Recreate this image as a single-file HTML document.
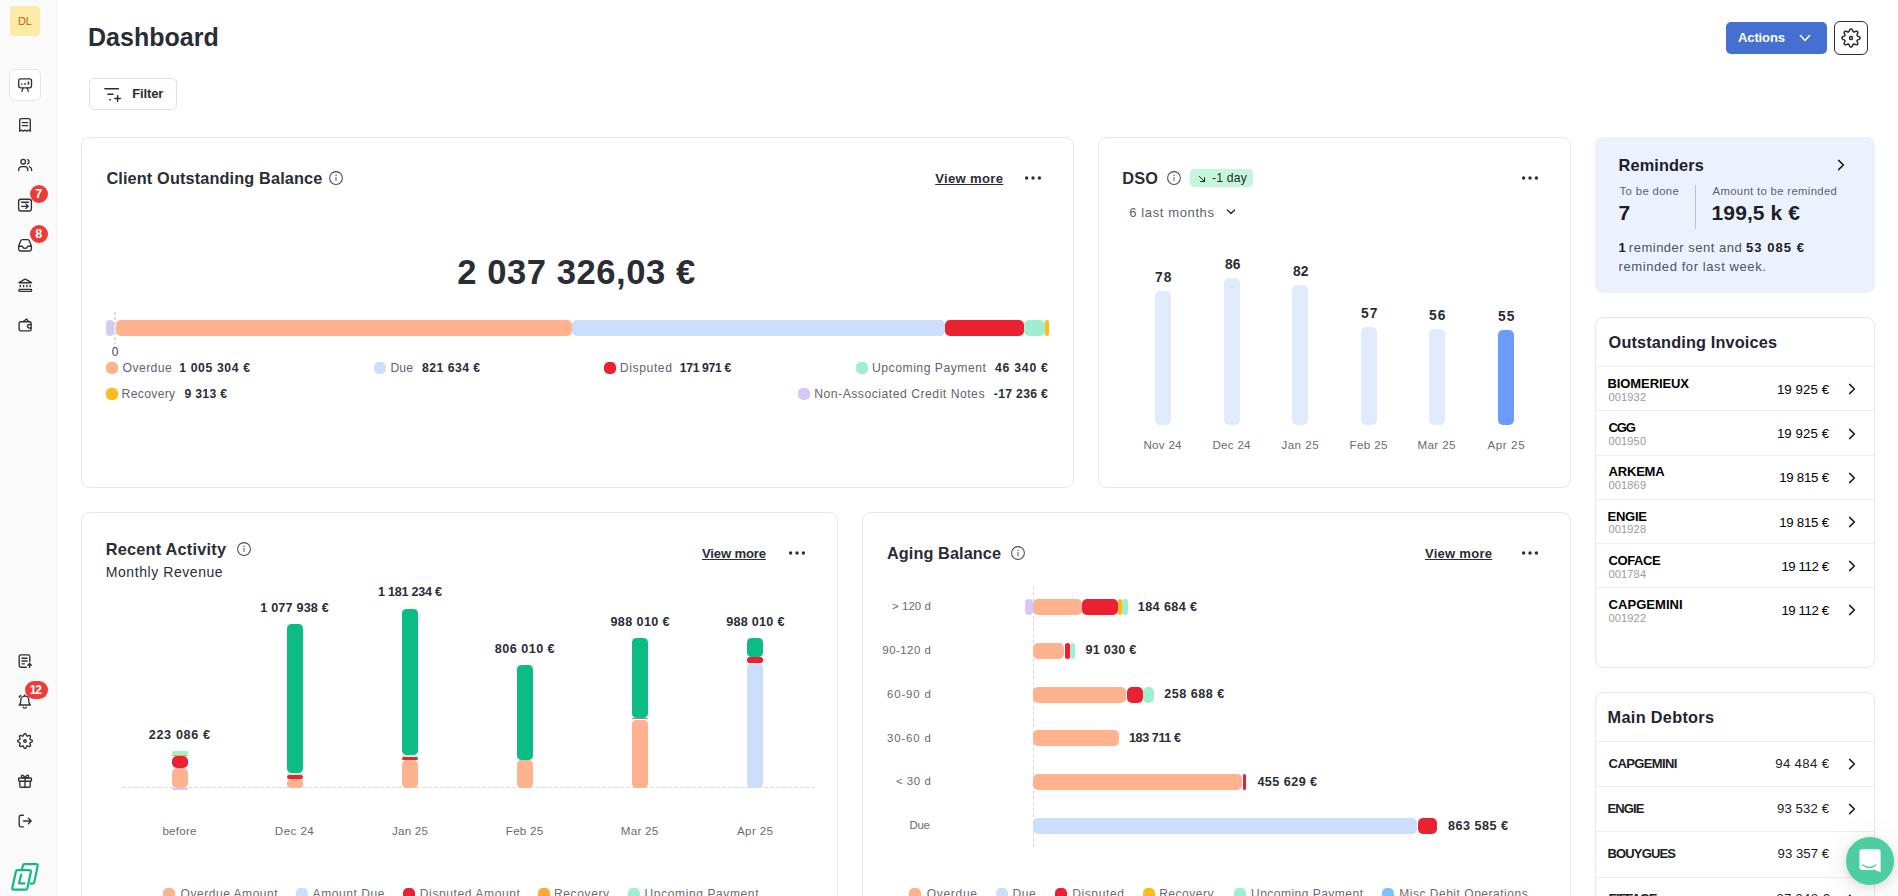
<!DOCTYPE html>
<html lang="en"><head><meta charset="utf-8"><title>Dashboard</title><style>
html,body{margin:0;padding:0;}
body{width:1898px;height:896px;overflow:hidden;background:#fff;position:relative;font-family:"Liberation Sans", sans-serif;}
.a{position:absolute;box-sizing:border-box;}
.t{position:absolute;white-space:nowrap;margin:0;padding:0;}
</style></head><body><nav aria-label="Sidebar"><div class="a" style="left:0px;top:0px;width:57px;height:896px;background:#fafafa;border-right:1px solid #f2f3f5;"></div><div class="a" style="left:10px;top:6px;width:30px;height:30px;background:#fdeaa7;border-radius:4px;"></div><span class="t" style="left:18.02px;top:15px;font-size:11px;line-height:12px;font-weight:400;color:#b26a08;letter-spacing:-0.112px;">DL</span><div class="a" style="left:9px;top:69px;width:32px;height:32px;background:#fff;border-radius:6px;border:1px solid #e4e6ea;"></div><svg class="a" style="left:17.0px;top:77.0px;" width="16" height="16" viewBox="0 0 16 16" fill="none" stroke="#2f3237" stroke-width="1.35" stroke-linecap="round" stroke-linejoin="round"><rect x="1.7" y="1.8" width="12.8" height="9" rx="2"/><path d="M6 11 L4.9 14.4 M10.2 11 L11.3 14.4"/><path d="M4.7 6.6v1.2 M8 6v1.8 M11.4 4.4v3.4" stroke-width="1.5" stroke-linecap="butt"/></svg><svg class="a" style="left:17.0px;top:117.0px;" width="16" height="16" viewBox="0 0 16 16" fill="none" stroke="#2f3237" stroke-width="1.35" stroke-linecap="round" stroke-linejoin="round"><path d="M2.7 14.2 V3.2 a1.6 1.6 0 0 1 1.6-1.6 h7.4 a1.6 1.6 0 0 1 1.6 1.6 V14.2 l-1.8-1 -1.75 1 -1.75-1 -1.75 1 -1.75-1 z"/><path d="M5.3 5.6h5.4 M5.3 8.6h5.4"/></svg><svg class="a" style="left:17.0px;top:157.0px;" width="16" height="16" viewBox="0 0 16 16" fill="none" stroke="#2f3237" stroke-width="1.35" stroke-linecap="round" stroke-linejoin="round"><circle cx="6.2" cy="4.7" r="2.3"/><path d="M1.7 13.6 v-1 a3 3 0 0 1 3-3 h3 a3 3 0 0 1 3 3 v1"/><path d="M10.6 2.6 a2.3 2.3 0 0 1 0 4.3 M14.6 13.6 v-1 a3 3 0 0 0 -2.1-2.8"/></svg><svg class="a" style="left:17.0px;top:197.0px;" width="16" height="16" viewBox="0 0 16 16" fill="none" stroke="#2f3237" stroke-width="1.35" stroke-linecap="round" stroke-linejoin="round"><rect x="1.6" y="2.2" width="12.8" height="11.8" rx="2.2"/><path d="M4.6 5.2h6.8 M4.6 9.3h6.6 M8.9 7 l2.3 2.3 -2.3 2.3"/></svg><svg class="a" style="left:17.0px;top:237.0px;" width="16" height="16" viewBox="0 0 16 16" fill="none" stroke="#2f3237" stroke-width="1.35" stroke-linecap="round" stroke-linejoin="round"><path d="M1.6 9.2 L3.6 3.9 a2 2 0 0 1 1.9-1.3 h5 a2 2 0 0 1 1.9 1.3 L14.4 9.2 v3 a1.8 1.8 0 0 1 -1.8 1.8 H3.4 a1.8 1.8 0 0 1 -1.8-1.8 z"/><path d="M1.6 9.2 h3.7 c.4 1.4 1.3 2.1 2.7 2.1 s2.3-.7 2.7-2.1 h3.7"/></svg><svg class="a" style="left:17.0px;top:277.0px;" width="16" height="16" viewBox="0 0 16 16" fill="none" stroke="#2f3237" stroke-width="1.35" stroke-linecap="round" stroke-linejoin="round"><path d="M2 5.7 L7.6 2.3 Q8.2 1.95 8.8 2.3 L14.5 5.7 z"/><path d="M3.3 7.8v2.5 M6.6 7.8v2.5 M9.9 7.8v2.5 M13.2 7.8v2.5" stroke-linecap="butt"/><rect x="2" y="12.3" width="12.5" height="2" rx=".4"/></svg><svg class="a" style="left:17.0px;top:317.0px;" width="16" height="16" viewBox="0 0 16 16" fill="none" stroke="#2f3237" stroke-width="1.35" stroke-linecap="round" stroke-linejoin="round"><path d="M6.2 4.5 L9.5 2 11.5 4.5"/><rect x="2.1" y="4.7" width="12" height="9.1" rx="1.5"/><path d="M14.1 7.5 h-1.9 a1.75 1.75 0 0 0 0 3.5 h1.9"/></svg><svg class="a" style="left:17.0px;top:653.0px;" width="16" height="16" viewBox="0 0 16 16" fill="none" stroke="#2f3237" stroke-width="1.35" stroke-linecap="round" stroke-linejoin="round"><path d="M9.4 14.2 H4 a1.8 1.8 0 0 1 -1.8-1.8 V3.6 A1.8 1.8 0 0 1 4 1.8 h7 a1.8 1.8 0 0 1 1.8 1.8 v5.2"/><path d="M5 5.2h5 M5 8h5 M5 10.8h2.4"/><path d="M12.6 14.6 v-4 M10.9 12.2 l1.7-1.7 1.7 1.7"/></svg><svg class="a" style="left:17.0px;top:693.0px;" width="16" height="16" viewBox="0 0 16 16" fill="none" stroke="#2f3237" stroke-width="1.35" stroke-linecap="round" stroke-linejoin="round"><path d="M2.2 12 c1.2-1 1.6-2.4 1.6-4 v-.9 a4 4 0 0 1 8 0 v.9 c0 1.6.4 3 1.6 4 z"/><path d="M6.3 14.2 a1.7 1.7 0 0 0 3 0 M7.8 2.9v-.9 M3.6 2.6 a5 5 0 0 0 -1.4 1.6"/></svg><svg class="a" style="left:17.0px;top:733.0px;" width="16" height="16" viewBox="0 0 16 16" fill="none" stroke="#2f3237" stroke-width="1.35" stroke-linecap="round" stroke-linejoin="round"><path d="M8.00 0.60 L8.48 0.73 L8.91 1.11 L9.24 1.77 L9.49 2.45 L9.74 2.87 L10.03 3.10 L10.39 3.14 L10.87 3.02 L11.53 2.72 L12.23 2.48 L12.80 2.52 L13.23 2.77 L13.48 3.20 L13.52 3.77 L13.28 4.47 L12.98 5.13 L12.86 5.61 L12.90 5.97 L13.13 6.26 L13.55 6.51 L14.23 6.76 L14.89 7.09 L15.27 7.52 L15.40 8.00 L15.27 8.48 L14.89 8.91 L14.23 9.24 L13.55 9.49 L13.13 9.74 L12.90 10.03 L12.86 10.39 L12.98 10.87 L13.28 11.53 L13.52 12.23 L13.48 12.80 L13.23 13.23 L12.80 13.48 L12.23 13.52 L11.53 13.28 L10.87 12.98 L10.39 12.86 L10.03 12.90 L9.74 13.13 L9.49 13.55 L9.24 14.23 L8.91 14.89 L8.48 15.27 L8.00 15.40 L7.52 15.27 L7.09 14.89 L6.76 14.23 L6.51 13.55 L6.26 13.13 L5.97 12.90 L5.61 12.86 L5.13 12.98 L4.47 13.28 L3.77 13.52 L3.20 13.48 L2.77 13.23 L2.52 12.80 L2.48 12.23 L2.72 11.53 L3.02 10.87 L3.14 10.39 L3.10 10.03 L2.87 9.74 L2.45 9.49 L1.77 9.24 L1.11 8.91 L0.73 8.48 L0.60 8.00 L0.73 7.52 L1.11 7.09 L1.77 6.76 L2.45 6.51 L2.87 6.26 L3.10 5.97 L3.14 5.61 L3.02 5.13 L2.72 4.47 L2.48 3.77 L2.52 3.20 L2.77 2.77 L3.20 2.52 L3.77 2.48 L4.47 2.72 L5.13 3.02 L5.61 3.14 L5.97 3.10 L6.26 2.87 L6.51 2.45 L6.76 1.77 L7.09 1.11 L7.52 0.73 z"/><circle cx="8" cy="8" r="1.25"/></svg><svg class="a" style="left:17.0px;top:773.0px;" width="16" height="16" viewBox="0 0 16 16" fill="none" stroke="#2f3237" stroke-width="1.35" stroke-linecap="round" stroke-linejoin="round"><rect x="1.6" y="5" width="12.8" height="3.2" rx=".8"/><path d="M2.8 8.2 v5 a1 1 0 0 0 1 1 h8.4 a1 1 0 0 0 1-1 v-5 M8 5v9.2"/><path d="M8 5 C6.8 2 4.6 1.6 4.4 3.2 4.2 4.6 6 5 8 5 c2 0 3.8-.4 3.6-1.8 C11.4 1.6 9.2 2 8 5z"/></svg><svg class="a" style="left:17.0px;top:813.0px;" width="16" height="16" viewBox="0 0 16 16" fill="none" stroke="#2f3237" stroke-width="1.35" stroke-linecap="round" stroke-linejoin="round"><path d="M6.4 2.2 H4 a1.8 1.8 0 0 0 -1.8 1.8 v8 A1.8 1.8 0 0 0 4 13.8 h2.4"/><path d="M6.6 8 h7.6 M11.4 5.2 L14.2 8 11.4 10.8"/></svg><div class="a" style="left:29.799999999999997px;top:184.8px;width:18px;height:18px;background:#ea3d37;border-radius:9px;"></div><span class="t" style="left:35.22px;top:187px;font-size:12.5px;line-height:14px;font-weight:700;color:#fff;">7</span><div class="a" style="left:29.799999999999997px;top:224.8px;width:18px;height:18px;background:#ea3d37;border-radius:9px;"></div><span class="t" style="left:35.22px;top:227px;font-size:12.5px;line-height:14px;font-weight:700;color:#fff;">8</span><div class="a" style="left:25px;top:681px;width:23px;height:18px;background:#ea3d37;border-radius:9px;"></div><span class="t" style="left:29.72px;top:683px;font-size:12px;line-height:14px;font-weight:700;color:#fff;letter-spacing:-1.200px;">12</span><svg class="a" style="left:8px;top:860px;" width="34" height="36" viewBox="0 0 34 36" fill="none" stroke="#12b981" stroke-width="2.2" stroke-linecap="round" stroke-linejoin="round"><path d="M14.1 8.6 L14.9 5.4 Q15.2 4.2 16.4 4.2 L28.4 4.2 Q30 4.2 29.7 5.8 L26.2 22.4 Q25.9 23.6 24.6 23.6 L22.8 23.6"/><path d="M9.6 10.2 L21.6 10.2 Q23.2 10.2 22.9 11.8 L19.3 28.5 Q19 29.7 17.7 29.7 L5.6 29.7 Q4 29.7 4.3 28.1 L7.9 11.4 Q8.2 10.2 9.6 10.2 z"/><path d="M13.4 13.7 L11 23.3 L17.3 23.3" stroke-linecap="butt"/></svg></nav><header aria-label="Header"><span class="t" style="left:88.0px;top:23px;font-size:25px;line-height:28px;font-weight:700;color:#2a2d36;letter-spacing:0.013px;">Dashboard</span><div class="a" style="left:1726px;top:22px;width:101px;height:32px;background:#4570d2;border-radius:5px;"></div><span class="t" style="left:1738px;top:30px;font-size:13px;line-height:15px;font-weight:700;color:#fff;letter-spacing:-0.120px;">Actions</span><svg class="a" style="left:1799px;top:33px;" width="12" height="10" viewBox="0 0 12 10" fill="none" stroke="#fff" stroke-width="1.5" stroke-linecap="round" stroke-linejoin="round"><path d="M1.4 2.6 L6 7.4 10.6 2.6"/></svg><div class="a" style="left:1834px;top:21px;width:34px;height:34px;background:#fff;border-radius:6px;border:1px solid #2a2d33;"></div><svg class="a" style="left:1839px;top:26px;" width="24" height="24" viewBox="0 0 24 24" fill="none" stroke="#2a2d33" stroke-width="1.5" stroke-linecap="round" stroke-linejoin="round"><path d="M12.00 2.85 L12.59 3.01 L13.12 3.48 L13.53 4.30 L13.84 5.14 L14.15 5.66 L14.51 5.95 L14.96 6.00 L15.55 5.85 L16.36 5.47 L17.23 5.18 L17.94 5.23 L18.47 5.53 L18.77 6.06 L18.82 6.77 L18.53 7.64 L18.15 8.45 L18.00 9.04 L18.05 9.49 L18.34 9.85 L18.86 10.16 L19.70 10.47 L20.52 10.88 L20.99 11.41 L21.15 12.00 L20.99 12.59 L20.52 13.12 L19.70 13.53 L18.86 13.84 L18.34 14.15 L18.05 14.51 L18.00 14.96 L18.15 15.55 L18.53 16.36 L18.82 17.23 L18.77 17.94 L18.47 18.47 L17.94 18.77 L17.23 18.82 L16.36 18.53 L15.55 18.15 L14.96 18.00 L14.51 18.05 L14.15 18.34 L13.84 18.86 L13.53 19.70 L13.12 20.52 L12.59 20.99 L12.00 21.15 L11.41 20.99 L10.88 20.52 L10.47 19.70 L10.16 18.86 L9.85 18.34 L9.49 18.05 L9.04 18.00 L8.45 18.15 L7.64 18.53 L6.77 18.82 L6.06 18.77 L5.53 18.47 L5.23 17.94 L5.18 17.23 L5.47 16.36 L5.85 15.55 L6.00 14.96 L5.95 14.51 L5.66 14.15 L5.14 13.84 L4.30 13.53 L3.48 13.12 L3.01 12.59 L2.85 12.00 L3.01 11.41 L3.48 10.88 L4.30 10.47 L5.14 10.16 L5.66 9.85 L5.95 9.49 L6.00 9.04 L5.85 8.45 L5.47 7.64 L5.18 6.77 L5.23 6.06 L5.53 5.53 L6.06 5.23 L6.77 5.18 L7.64 5.47 L8.45 5.85 L9.04 6.00 L9.49 5.95 L9.85 5.66 L10.16 5.14 L10.47 4.30 L10.88 3.48 L11.41 3.01 z"/><rect x="10.6" y="10.6" width="2.8" height="2.8" rx="1"/></svg><div class="a" style="left:89px;top:78px;width:88px;height:32px;background:#fff;border-radius:5px;border:1px solid #dfe1e5;"></div><svg class="a" style="left:103px;top:86px;" width="20" height="18" viewBox="0 0 20 18" fill="none" stroke="#2a2d33" stroke-width="1.5" stroke-linecap="round" stroke-linejoin="round"><path d="M1.85 2.75H15.45 M4.85 8.3H9.95 M6.8 13.8h.6 M11.85 12.5H17.25 M14.6 9.85V15.15"/></svg><span class="t" style="left:132.2px;top:86px;font-size:13px;line-height:15px;font-weight:700;color:#2a2d36;letter-spacing:-0.117px;">Filter</span></header><section aria-label="Client Outstanding Balance"><div class="a" style="left:81px;top:137px;width:993px;height:351px;background:#fff;border-radius:8.6px;border:1px solid #e5e7ea;"></div><span class="t" style="left:106.4px;top:169px;font-size:16.3px;line-height:18px;font-weight:700;color:#2a2d36;letter-spacing:0.134px;">Client Outstanding Balance</span><svg class="a" style="left:328px;top:170px;" width="16" height="16" viewBox="0 0 16 16" fill="none" stroke="#4a4d55" stroke-width="1.05" stroke-linecap="round" stroke-linejoin="round"><circle cx="8" cy="8" r="6.4"/><path d="M8 7.4v3.2" stroke-width="1.15" stroke="#6a6d75"/><circle cx="8" cy="5.2" r=".45" fill="#6a6d75" stroke="#6a6d75" stroke-width=".5"/></svg><span class="t" style="left:935.2px;top:171px;font-size:13.1px;line-height:15px;font-weight:700;color:#2a2d36;letter-spacing:0.322px;text-decoration:underline;text-underline-offset:1px;">View more</span><svg class="a" style="left:1023px;top:174px;" width="20" height="8" viewBox="0 0 20 8" fill="#2a2d33" stroke="none" stroke-width="0" stroke-linecap="round" stroke-linejoin="round"><circle cx="3.6" cy="4" r="1.7"/><circle cx="10" cy="4" r="1.7"/><circle cx="16.4" cy="4" r="1.7"/></svg><span class="t" style="left:457.22px;top:253px;font-size:34.6px;line-height:38px;font-weight:700;color:#2a2d36;letter-spacing:0.554px;">2 037 326,03 €</span><svg class="a" style="left:112px;top:312px" width="8" height="32"><line x1="3" y1="0" x2="3" y2="32" stroke="#dfdfdf" stroke-width="2" stroke-dasharray="3 2"/></svg><div class="a" style="left:106px;top:320px;width:8px;height:16px;background:#d4c8f5;border-radius:4px;"></div><div class="a" style="left:116px;top:320px;width:456px;height:16px;background:#feb28d;border-radius:5px;"></div><div class="a" style="left:572px;top:320px;width:373px;height:16px;background:#cbdefc;border-radius:5px;"></div><div class="a" style="left:945px;top:320px;width:79px;height:16px;background:#e92131;border-radius:5px;"></div><div class="a" style="left:1024px;top:320px;width:21px;height:16px;background:#a0eed0;border-radius:5px;"></div><div class="a" style="left:1045px;top:320px;width:4px;height:16px;background:#fbbc1c;border-radius:2px;"></div><span class="t" style="left:111.86px;top:345px;font-size:12px;line-height:14px;font-weight:400;color:#444;">0</span><div class="a" style="left:106px;top:362px;width:12px;height:12px;background:#feb28d;border-radius:4.8px;"></div><span class="t" style="left:122.6px;top:361px;font-size:12.2px;line-height:14px;font-weight:400;color:#5f6470;letter-spacing:0.402px;">Overdue</span><span class="t" style="left:179.2px;top:361px;font-size:12.2px;line-height:14px;font-weight:700;color:#2a2d36;letter-spacing:0.640px;">1 005 304 €</span><div class="a" style="left:374px;top:362px;width:12px;height:12px;background:#cbdefc;border-radius:4.8px;"></div><span class="t" style="left:390.4px;top:361px;font-size:12.2px;line-height:14px;font-weight:400;color:#5f6470;letter-spacing:0.110px;">Due</span><span class="t" style="left:422.0px;top:361px;font-size:12.2px;line-height:14px;font-weight:700;color:#2a2d36;letter-spacing:0.477px;">821 634 €</span><div class="a" style="left:604px;top:362px;width:12px;height:12px;background:#e92131;border-radius:4.8px;"></div><span class="t" style="left:619.8px;top:361px;font-size:12.2px;line-height:14px;font-weight:400;color:#5f6470;letter-spacing:0.587px;">Disputed</span><span class="t" style="left:679.8px;top:361px;font-size:12.2px;line-height:14px;font-weight:700;color:#2a2d36;letter-spacing:-0.352px;">171 971 €</span><div class="a" style="left:856px;top:362px;width:12px;height:12px;background:#a0eed0;border-radius:4.8px;"></div><span class="t" style="left:872px;top:361px;font-size:12.2px;line-height:14px;font-weight:400;color:#5f6470;letter-spacing:0.509px;">Upcoming Payment</span><span class="t" style="left:995.0px;top:361px;font-size:12.2px;line-height:14px;font-weight:700;color:#2a2d36;letter-spacing:0.777px;">46 340 €</span><div class="a" style="left:106px;top:388px;width:12px;height:12px;background:#fbbc1c;border-radius:4.8px;"></div><span class="t" style="left:121.6px;top:387px;font-size:12.2px;line-height:14px;font-weight:400;color:#5f6470;letter-spacing:0.299px;">Recovery</span><span class="t" style="left:184.4px;top:387px;font-size:12.2px;line-height:14px;font-weight:700;color:#2a2d36;letter-spacing:0.318px;">9 313 €</span><div class="a" style="left:798px;top:388px;width:12px;height:12px;background:#d4c8f5;border-radius:4.8px;"></div><span class="t" style="left:814.2px;top:387px;font-size:12.2px;line-height:14px;font-weight:400;color:#5f6470;letter-spacing:0.506px;">Non-Associated Credit Notes</span><span class="t" style="left:993.8px;top:387px;font-size:12.2px;line-height:14px;font-weight:700;color:#2a2d36;letter-spacing:0.319px;">-17 236 €</span></section><section aria-label="DSO"><div class="a" style="left:1098px;top:137px;width:473px;height:351px;background:#fff;border-radius:8.6px;border:1px solid #e5e7ea;"></div><span class="t" style="left:1122.2px;top:169px;font-size:16.3px;line-height:18px;font-weight:700;color:#2a2d36;letter-spacing:0.252px;">DSO</span><svg class="a" style="left:1166px;top:170px;" width="16" height="16" viewBox="0 0 16 16" fill="none" stroke="#4a4d55" stroke-width="1.05" stroke-linecap="round" stroke-linejoin="round"><circle cx="8" cy="8" r="6.4"/><path d="M8 7.4v3.2" stroke-width="1.15" stroke="#6a6d75"/><circle cx="8" cy="5.2" r=".45" fill="#6a6d75" stroke="#6a6d75" stroke-width=".5"/></svg><div class="a" style="left:1190px;top:169px;width:63px;height:18px;background:#c5f6db;border-radius:4.5px;"></div><svg class="a" style="left:1197px;top:173.5px;" width="10" height="10" viewBox="0 0 10 10" fill="none" stroke="#1d2b25" stroke-width="1.0" stroke-linecap="round" stroke-linejoin="round"><path d="M2.2 2.2 L7.4 7.4 M3.6 7.5 H7.5 V3.6"/></svg><span class="t" style="left:1212.0px;top:171px;font-size:12.2px;line-height:14px;font-weight:400;color:#1d2b25;letter-spacing:0.173px;">-1 day</span><span class="t" style="left:1129.2px;top:205px;font-size:13px;line-height:15px;font-weight:400;color:#5b6170;letter-spacing:0.622px;">6 last months</span><svg class="a" style="left:1226px;top:208px;" width="10" height="8" viewBox="0 0 10 8" fill="none" stroke="#2a2d33" stroke-width="1.4" stroke-linecap="round" stroke-linejoin="round"><path d="M1.4 1.9 L5 5.6 8.6 1.9"/></svg><div class="a" style="left:1155px;top:291.3px;width:16px;height:133.39999999999998px;background:#e0ecfd;border-radius:5px;"></div><span class="t" style="left:1155.04px;top:270px;font-size:13.8px;line-height:15px;font-weight:700;color:#2a2d36;letter-spacing:0.961px;">78</span><span class="t" style="left:1143.44px;top:439px;font-size:11.6px;line-height:12px;font-weight:400;color:#686b73;letter-spacing:0.275px;">Nov 24</span><div class="a" style="left:1224px;top:278px;width:16px;height:146.7px;background:#e0ecfd;border-radius:5px;"></div><span class="t" style="left:1224.99px;top:257px;font-size:13.8px;line-height:15px;font-weight:700;color:#2a2d36;letter-spacing:0.061px;">86</span><span class="t" style="left:1212.44px;top:439px;font-size:11.6px;line-height:12px;font-weight:400;color:#686b73;letter-spacing:0.275px;">Dec 24</span><div class="a" style="left:1292px;top:285px;width:16px;height:139.7px;background:#e0ecfd;border-radius:5px;"></div><span class="t" style="left:1292.99px;top:264px;font-size:13.8px;line-height:15px;font-weight:700;color:#2a2d36;letter-spacing:0.061px;">82</span><span class="t" style="left:1281.4px;top:439px;font-size:11.6px;line-height:12px;font-weight:400;color:#686b73;letter-spacing:0.479px;">Jan 25</span><div class="a" style="left:1361px;top:327.3px;width:16px;height:97.39999999999998px;background:#e0ecfd;border-radius:5px;"></div><span class="t" style="left:1361.04px;top:306px;font-size:13.8px;line-height:15px;font-weight:700;color:#2a2d36;letter-spacing:0.961px;">57</span><span class="t" style="left:1349.44px;top:439px;font-size:11.6px;line-height:12px;font-weight:400;color:#686b73;letter-spacing:0.400px;">Feb 25</span><div class="a" style="left:1429px;top:329px;width:16px;height:95.69999999999999px;background:#e0ecfd;border-radius:5px;"></div><span class="t" style="left:1429.04px;top:308px;font-size:13.8px;line-height:15px;font-weight:700;color:#2a2d36;letter-spacing:0.961px;">56</span><span class="t" style="left:1417.44px;top:439px;font-size:11.6px;line-height:12px;font-weight:400;color:#686b73;letter-spacing:0.403px;">Mar 25</span><div class="a" style="left:1498px;top:330.4px;width:16px;height:94.30000000000001px;background:#6c9bfd;border-radius:5px;"></div><span class="t" style="left:1498.04px;top:309px;font-size:13.8px;line-height:15px;font-weight:700;color:#2a2d36;letter-spacing:0.961px;">55</span><span class="t" style="left:1487.4px;top:439px;font-size:11.6px;line-height:12px;font-weight:400;color:#686b73;letter-spacing:0.608px;">Apr 25</span><svg class="a" style="left:1520px;top:174px;" width="20" height="8" viewBox="0 0 20 8" fill="#2a2d33" stroke="none" stroke-width="0" stroke-linecap="round" stroke-linejoin="round"><circle cx="3.6" cy="4" r="1.7"/><circle cx="10" cy="4" r="1.7"/><circle cx="16.4" cy="4" r="1.7"/></svg></section><section aria-label="Reminders"><div class="a" style="left:1595px;top:137px;width:280px;height:156px;background:#ebf2fe;border-radius:8px;"></div><span class="t" style="left:1618.6px;top:156px;font-size:16.3px;line-height:18px;font-weight:700;color:#1d2027;letter-spacing:0.119px;">Reminders</span><svg class="a" style="left:1837px;top:159.4px;" width="8" height="12" viewBox="0 0 8 12" fill="none" stroke="#16181d" stroke-width="1.5" stroke-linecap="round" stroke-linejoin="round"><path d="M1.6 1.4 L6.4 6 1.6 10.6"/></svg><span class="t" style="left:1619.6px;top:185px;font-size:11.3px;line-height:12px;font-weight:400;color:#5b6170;letter-spacing:0.362px;">To be done</span><span class="t" style="left:1618.6px;top:201px;font-size:21px;line-height:23px;font-weight:700;color:#1d2027;">7</span><div class="a" style="left:1695px;top:185px;width:1px;height:44px;background:#a9c3f3;"></div><span class="t" style="left:1712.6px;top:185px;font-size:11.3px;line-height:12px;font-weight:400;color:#5b6170;letter-spacing:0.339px;">Amount to be reminded</span><span class="t" style="left:1711.6px;top:201px;font-size:21px;line-height:23px;font-weight:700;color:#1d2027;letter-spacing:0.091px;">199,5 k €</span><span class="t" style="left:1618.6px;top:240px;font-size:13px;line-height:15px;font-weight:700;color:#1d2027;">1</span><span class="t" style="left:1628.8px;top:240px;font-size:13px;line-height:15px;font-weight:400;color:#4d525e;letter-spacing:0.514px;">reminder sent and</span><span class="t" style="left:1746.0px;top:240px;font-size:13px;line-height:15px;font-weight:700;color:#1d2027;letter-spacing:1.042px;">53 085 €</span><span class="t" style="left:1618.6px;top:259px;font-size:13px;line-height:15px;font-weight:400;color:#4d525e;letter-spacing:0.585px;">reminded for last week.</span></section><section aria-label="Outstanding Invoices"><div class="a" style="left:1595px;top:317px;width:280px;height:350.5px;background:#fff;border-radius:8.6px;border:1px solid #e5e7ea;"></div><span class="t" style="left:1608.6px;top:333px;font-size:16.3px;line-height:18px;font-weight:700;color:#1f2430;letter-spacing:0.148px;">Outstanding Invoices</span><div class="a" style="left:1596px;top:366px;width:278px;height:1px;background:#ededef;"></div><span class="t" style="left:1607.6px;top:376px;font-size:13px;line-height:15px;font-weight:700;color:#000;letter-spacing:-0.114px;">BIOMERIEUX</span><span class="t" style="left:1608.6px;top:391px;font-size:11px;line-height:12px;font-weight:400;color:#9a9a9a;letter-spacing:0.140px;">001932</span><span class="t" style="left:1776.95px;top:382px;font-size:13.2px;line-height:15px;font-weight:400;color:#000;letter-spacing:0.101px;">19 925 €</span><svg class="a" style="left:1848px;top:383.3px;" width="8" height="12" viewBox="0 0 8 12" fill="none" stroke="#16181d" stroke-width="1.5" stroke-linecap="round" stroke-linejoin="round"><path d="M1.6 1.4 L6.4 6 1.6 10.6"/></svg><div class="a" style="left:1596px;top:410px;width:278px;height:1px;background:#ededef;"></div><span class="t" style="left:1608.6px;top:420px;font-size:13px;line-height:15px;font-weight:700;color:#000;letter-spacing:-1.200px;">CGG</span><span class="t" style="left:1608.6px;top:435px;font-size:11px;line-height:12px;font-weight:400;color:#9a9a9a;letter-spacing:0.140px;">001950</span><span class="t" style="left:1776.95px;top:426px;font-size:13.2px;line-height:15px;font-weight:400;color:#000;letter-spacing:0.101px;">19 925 €</span><svg class="a" style="left:1848px;top:427.53000000000003px;" width="8" height="12" viewBox="0 0 8 12" fill="none" stroke="#16181d" stroke-width="1.5" stroke-linecap="round" stroke-linejoin="round"><path d="M1.6 1.4 L6.4 6 1.6 10.6"/></svg><div class="a" style="left:1596px;top:455px;width:278px;height:1px;background:#ededef;"></div><span class="t" style="left:1608.6px;top:464px;font-size:13px;line-height:15px;font-weight:700;color:#000;letter-spacing:-0.203px;">ARKEMA</span><span class="t" style="left:1608.6px;top:479px;font-size:11px;line-height:12px;font-weight:400;color:#9a9a9a;letter-spacing:0.140px;">001869</span><span class="t" style="left:1779.16px;top:470px;font-size:13.2px;line-height:15px;font-weight:400;color:#000;letter-spacing:-0.215px;">19 815 €</span><svg class="a" style="left:1848px;top:471.76px;" width="8" height="12" viewBox="0 0 8 12" fill="none" stroke="#16181d" stroke-width="1.5" stroke-linecap="round" stroke-linejoin="round"><path d="M1.6 1.4 L6.4 6 1.6 10.6"/></svg><div class="a" style="left:1596px;top:499px;width:278px;height:1px;background:#ededef;"></div><span class="t" style="left:1607.6px;top:509px;font-size:13px;line-height:15px;font-weight:700;color:#000;letter-spacing:-0.287px;">ENGIE</span><span class="t" style="left:1608.6px;top:523px;font-size:11px;line-height:12px;font-weight:400;color:#9a9a9a;letter-spacing:0.140px;">001928</span><span class="t" style="left:1779.16px;top:515px;font-size:13.2px;line-height:15px;font-weight:400;color:#000;letter-spacing:-0.215px;">19 815 €</span><svg class="a" style="left:1848px;top:515.99px;" width="8" height="12" viewBox="0 0 8 12" fill="none" stroke="#16181d" stroke-width="1.5" stroke-linecap="round" stroke-linejoin="round"><path d="M1.6 1.4 L6.4 6 1.6 10.6"/></svg><div class="a" style="left:1596px;top:543px;width:278px;height:1px;background:#ededef;"></div><span class="t" style="left:1608.6px;top:553px;font-size:13px;line-height:15px;font-weight:700;color:#000;letter-spacing:-0.434px;">COFACE</span><span class="t" style="left:1608.6px;top:568px;font-size:11px;line-height:12px;font-weight:400;color:#9a9a9a;letter-spacing:0.140px;">001784</span><span class="t" style="left:1781.42px;top:559px;font-size:13.2px;line-height:15px;font-weight:400;color:#000;letter-spacing:-0.397px;">19 112 €</span><svg class="a" style="left:1848px;top:560.22px;" width="8" height="12" viewBox="0 0 8 12" fill="none" stroke="#16181d" stroke-width="1.5" stroke-linecap="round" stroke-linejoin="round"><path d="M1.6 1.4 L6.4 6 1.6 10.6"/></svg><div class="a" style="left:1596px;top:587px;width:278px;height:1px;background:#ededef;"></div><span class="t" style="left:1608.6px;top:597px;font-size:13px;line-height:15px;font-weight:700;color:#000;letter-spacing:0.041px;">CAPGEMINI</span><span class="t" style="left:1608.6px;top:612px;font-size:11px;line-height:12px;font-weight:400;color:#9a9a9a;letter-spacing:0.140px;">001922</span><span class="t" style="left:1781.42px;top:603px;font-size:13.2px;line-height:15px;font-weight:400;color:#000;letter-spacing:-0.397px;">19 112 €</span><svg class="a" style="left:1848px;top:604.45px;" width="8" height="12" viewBox="0 0 8 12" fill="none" stroke="#16181d" stroke-width="1.5" stroke-linecap="round" stroke-linejoin="round"><path d="M1.6 1.4 L6.4 6 1.6 10.6"/></svg></section><section aria-label="Main Debtors"><div class="a" style="left:1595px;top:692px;width:280px;height:260px;background:#fff;border-radius:8.6px;border:1px solid #e5e7ea;"></div><span class="t" style="left:1607.6px;top:708px;font-size:16.3px;line-height:18px;font-weight:700;color:#1f2430;letter-spacing:0.304px;">Main Debtors</span><div class="a" style="left:1596px;top:741px;width:278px;height:1px;background:#ededef;"></div><span class="t" style="left:1608.6px;top:756px;font-size:13px;line-height:15px;font-weight:700;color:#1d2027;letter-spacing:-0.604px;">CAPGEMINI</span><span class="t" style="left:1775.21px;top:756px;font-size:13.2px;line-height:15px;font-weight:400;color:#1d2027;letter-spacing:0.349px;">94 484 €</span><svg class="a" style="left:1848px;top:758.3px;" width="8" height="12" viewBox="0 0 8 12" fill="none" stroke="#16181d" stroke-width="1.5" stroke-linecap="round" stroke-linejoin="round"><path d="M1.6 1.4 L6.4 6 1.6 10.6"/></svg><div class="a" style="left:1596px;top:786px;width:278px;height:1px;background:#ededef;"></div><span class="t" style="left:1607.6px;top:801px;font-size:13px;line-height:15px;font-weight:700;color:#1d2027;letter-spacing:-0.932px;">ENGIE</span><span class="t" style="left:1777.0px;top:801px;font-size:13.2px;line-height:15px;font-weight:400;color:#1d2027;letter-spacing:0.094px;">93 532 €</span><svg class="a" style="left:1848px;top:803.37px;" width="8" height="12" viewBox="0 0 8 12" fill="none" stroke="#16181d" stroke-width="1.5" stroke-linecap="round" stroke-linejoin="round"><path d="M1.6 1.4 L6.4 6 1.6 10.6"/></svg><div class="a" style="left:1596px;top:831px;width:278px;height:1px;background:#ededef;"></div><span class="t" style="left:1607.6px;top:846px;font-size:13px;line-height:15px;font-weight:700;color:#1d2027;letter-spacing:-0.869px;">BOUYGUES</span><span class="t" style="left:1777.58px;top:846px;font-size:13.2px;line-height:15px;font-weight:400;color:#1d2027;letter-spacing:0.011px;">93 357 €</span><svg class="a" style="left:1848px;top:848.4399999999999px;" width="8" height="12" viewBox="0 0 8 12" fill="none" stroke="#16181d" stroke-width="1.5" stroke-linecap="round" stroke-linejoin="round"><path d="M1.6 1.4 L6.4 6 1.6 10.6"/></svg><div class="a" style="left:1596px;top:877px;width:278px;height:1px;background:#ededef;"></div><span class="t" style="left:1608.4px;top:891px;font-size:13px;line-height:15px;font-weight:700;color:#1d2027;letter-spacing:-1.104px;">EIFFAGE</span><span class="t" style="left:1776.5px;top:891px;font-size:13.2px;line-height:15px;font-weight:400;color:#1d2027;letter-spacing:0.237px;">87 848 €</span><svg class="a" style="left:1848px;top:893.51px;" width="8" height="12" viewBox="0 0 8 12" fill="none" stroke="#16181d" stroke-width="1.5" stroke-linecap="round" stroke-linejoin="round"><path d="M1.6 1.4 L6.4 6 1.6 10.6"/></svg></section><section aria-label="Recent Activity"><div class="a" style="left:81px;top:512px;width:757px;height:420px;background:#fff;border-radius:8.6px;border:1px solid #e5e7ea;"></div><span class="t" style="left:105.8px;top:540px;font-size:16.3px;line-height:18px;font-weight:700;color:#2a2d36;letter-spacing:0.223px;">Recent Activity</span><svg class="a" style="left:236px;top:541px;" width="16" height="16" viewBox="0 0 16 16" fill="none" stroke="#4a4d55" stroke-width="1.05" stroke-linecap="round" stroke-linejoin="round"><circle cx="8" cy="8" r="6.4"/><path d="M8 7.4v3.2" stroke-width="1.15" stroke="#6a6d75"/><circle cx="8" cy="5.2" r=".45" fill="#6a6d75" stroke="#6a6d75" stroke-width=".5"/></svg><span class="t" style="left:105.8px;top:564px;font-size:14px;line-height:16px;font-weight:400;color:#2a2e3a;letter-spacing:0.564px;">Monthly Revenue</span><span class="t" style="left:702px;top:546px;font-size:13.1px;line-height:15px;font-weight:700;color:#2a2d36;letter-spacing:-0.152px;text-decoration:underline;text-underline-offset:1px;">View more</span><svg class="a" style="left:787.2px;top:549px;" width="20" height="8" viewBox="0 0 20 8" fill="#2a2d33" stroke="none" stroke-width="0" stroke-linecap="round" stroke-linejoin="round"><circle cx="3.6" cy="4" r="1.7"/><circle cx="10" cy="4" r="1.7"/><circle cx="16.4" cy="4" r="1.7"/></svg><svg class="a" style="left:122px;top:784px" width="692" height="8"><line x1="0" y1="3.5" x2="692" y2="3.5" stroke="#dadada" stroke-width="1" stroke-dasharray="4 2"/></svg><div class="a" style="left:172px;top:751px;width:16px;height:3.7000000000000455px;background:#a0eed0;border-radius:1.6px;"></div><div class="a" style="left:172px;top:754.9px;width:16px;height:1.3000000000000682px;background:#fcaa3c;border-radius:0.5px;"></div><div class="a" style="left:172px;top:756.4px;width:16px;height:11.5px;background:#e92131;border-radius:5px;"></div><div class="a" style="left:172px;top:767.9px;width:16px;height:19.899999999999977px;background:#feb28d;border-radius:5px;"></div><div class="a" style="left:172px;top:788.1999999999999px;width:16px;height:2.0000000000001137px;background:#d4c8f5;border-radius:1.0000000000000568px;"></div><div class="a" style="left:287px;top:624.0px;width:16px;height:149.10000000000002px;background:#0bbd84;border-radius:4.5px;"></div><div class="a" style="left:287px;top:773.2px;width:16px;height:2.099999999999909px;background:#b4f4dc;border-radius:0.4px;"></div><div class="a" style="left:287px;top:775.1px;width:16px;height:4.0px;background:#e92131;border-radius:2px;"></div><div class="a" style="left:287px;top:779.4px;width:16px;height:8.399999999999977px;background:#feb28d;border-radius:4px;"></div><div class="a" style="left:402px;top:608.7px;width:16px;height:146.39999999999998px;background:#0bbd84;border-radius:4.5px;"></div><div class="a" style="left:402px;top:755.2px;width:16px;height:1.7999999999999545px;background:#b4f4dc;border-radius:0.4px;"></div><div class="a" style="left:402px;top:756.8px;width:16px;height:3.400000000000091px;background:#e92131;border-radius:1.7px;"></div><div class="a" style="left:402px;top:760.4px;width:16px;height:27.399999999999977px;background:#feb28d;border-radius:4.5px;"></div><div class="a" style="left:517px;top:665.4px;width:16px;height:94.5px;background:#0bbd84;border-radius:4.5px;"></div><div class="a" style="left:517px;top:759.9px;width:16px;height:27.899999999999977px;background:#feb28d;border-radius:4.5px;"></div><div class="a" style="left:632px;top:638px;width:16px;height:80.29999999999995px;background:#0bbd84;border-radius:4.5px;"></div><div class="a" style="left:632px;top:718.2px;width:16px;height:1.2999999999999545px;background:#e5708c;border-radius:0.3px;"></div><div class="a" style="left:632px;top:719.7px;width:16px;height:68.09999999999991px;background:#feb28d;border-radius:4.5px;"></div><div class="a" style="left:747px;top:638px;width:16px;height:18.700000000000045px;background:#0bbd84;border-radius:4.5px;"></div><div class="a" style="left:747px;top:657.3px;width:16px;height:6.0px;background:#e92131;border-radius:2.8px;"></div><div class="a" style="left:747px;top:663.4px;width:16px;height:124.39999999999998px;background:#cbdefc;border-radius:4.5px;"></div><span class="t" style="left:148.77px;top:728px;font-size:12.6px;line-height:14px;font-weight:700;color:#2a2d36;letter-spacing:0.654px;">223 086 €</span><span class="t" style="left:260.24px;top:601px;font-size:12.6px;line-height:14px;font-weight:700;color:#2a2d36;letter-spacing:0.200px;">1 077 938 €</span><span class="t" style="left:378.0px;top:585px;font-size:12.6px;line-height:14px;font-weight:700;color:#2a2d36;letter-spacing:-0.253px;">1 181 234 €</span><span class="t" style="left:494.8px;top:642px;font-size:12.6px;line-height:14px;font-weight:700;color:#2a2d36;letter-spacing:0.470px;">806 010 €</span><span class="t" style="left:610.4px;top:615px;font-size:12.6px;line-height:14px;font-weight:700;color:#2a2d36;letter-spacing:0.397px;">988 010 €</span><span class="t" style="left:726.17px;top:615px;font-size:12.6px;line-height:14px;font-weight:700;color:#2a2d36;letter-spacing:0.279px;">988 010 €</span><span class="t" style="left:162.42px;top:825px;font-size:11.6px;line-height:12px;font-weight:400;color:#686b73;letter-spacing:0.257px;">before</span><span class="t" style="left:274.87px;top:825px;font-size:11.6px;line-height:12px;font-weight:400;color:#686b73;letter-spacing:0.423px;">Dec 24</span><span class="t" style="left:392.0px;top:825px;font-size:11.6px;line-height:12px;font-weight:400;color:#686b73;letter-spacing:0.237px;">Jan 25</span><span class="t" style="left:505.84px;top:825px;font-size:11.6px;line-height:12px;font-weight:400;color:#686b73;letter-spacing:0.242px;">Feb 25</span><span class="t" style="left:620.84px;top:825px;font-size:11.6px;line-height:12px;font-weight:400;color:#686b73;letter-spacing:0.245px;">Mar 25</span><span class="t" style="left:737.0px;top:825px;font-size:11.6px;line-height:12px;font-weight:400;color:#686b73;letter-spacing:0.366px;">Apr 25</span><div class="a" style="left:163px;top:888px;width:12px;height:12px;background:#feb28d;border-radius:4.8px;"></div><span class="t" style="left:180.6px;top:887px;font-size:12px;line-height:14px;font-weight:400;color:#686b73;letter-spacing:0.534px;">Overdue Amount</span><div class="a" style="left:296px;top:888px;width:12px;height:12px;background:#cbdefc;border-radius:4.8px;"></div><span class="t" style="left:312.6px;top:887px;font-size:12px;line-height:14px;font-weight:400;color:#686b73;letter-spacing:0.577px;">Amount Due</span><div class="a" style="left:402.8px;top:888px;width:12px;height:12px;background:#e92131;border-radius:4.8px;"></div><span class="t" style="left:419.8px;top:887px;font-size:12px;line-height:14px;font-weight:400;color:#686b73;letter-spacing:0.626px;">Disputed Amount</span><div class="a" style="left:537.6px;top:888px;width:12px;height:12px;background:#fdaa3a;border-radius:4.8px;"></div><span class="t" style="left:554.0px;top:887px;font-size:12px;line-height:14px;font-weight:400;color:#686b73;letter-spacing:0.632px;">Recovery</span><div class="a" style="left:628px;top:888px;width:12px;height:12px;background:#a0eed0;border-radius:4.8px;"></div><span class="t" style="left:644.6px;top:887px;font-size:12px;line-height:14px;font-weight:400;color:#686b73;letter-spacing:0.612px;">Upcoming Payment</span></section><section aria-label="Aging Balance"><div class="a" style="left:862px;top:512px;width:709px;height:420px;background:#fff;border-radius:8.6px;border:1px solid #e5e7ea;"></div><span class="t" style="left:887px;top:544px;font-size:16.3px;line-height:18px;font-weight:700;color:#2a2d36;letter-spacing:0.076px;">Aging Balance</span><svg class="a" style="left:1010.3px;top:545.3px;" width="16" height="16" viewBox="0 0 16 16" fill="none" stroke="#4a4d55" stroke-width="1.05" stroke-linecap="round" stroke-linejoin="round"><circle cx="8" cy="8" r="6.4"/><path d="M8 7.4v3.2" stroke-width="1.15" stroke="#6a6d75"/><circle cx="8" cy="5.2" r=".45" fill="#6a6d75" stroke="#6a6d75" stroke-width=".5"/></svg><span class="t" style="left:1425.0px;top:546px;font-size:13.1px;line-height:15px;font-weight:700;color:#2a2d36;letter-spacing:0.223px;text-decoration:underline;text-underline-offset:1px;">View more</span><svg class="a" style="left:1520px;top:549px;" width="20" height="8" viewBox="0 0 20 8" fill="#2a2d33" stroke="none" stroke-width="0" stroke-linecap="round" stroke-linejoin="round"><circle cx="3.6" cy="4" r="1.7"/><circle cx="10" cy="4" r="1.7"/><circle cx="16.4" cy="4" r="1.7"/></svg><svg class="a" style="left:1030px;top:586px" width="8" height="262"><line x1="3.5" y1="0" x2="3.5" y2="262" stroke="#d5dae0" stroke-width="1" stroke-dasharray="3.5 2.5"/></svg><span class="t" style="left:892.06px;top:600px;font-size:11.4px;line-height:12px;font-weight:400;color:#666a72;letter-spacing:0.069px;">> 120 d</span><div class="a" style="left:1025px;top:599px;width:8px;height:16px;background:#d4c8f5;border-radius:4px;"></div><div class="a" style="left:1033px;top:599px;width:48.799999999999955px;height:16px;background:#feb28d;border-radius:5px;"></div><div class="a" style="left:1082px;top:599px;width:35.5px;height:16px;background:#e92131;border-radius:5px;"></div><div class="a" style="left:1117.7px;top:599px;width:4.2000000000000455px;height:16px;background:#fbbc1c;border-radius:2px;"></div><div class="a" style="left:1122.2px;top:599px;width:5.5px;height:16px;background:#a0eed0;border-radius:2.7px;"></div><span class="t" style="left:1137.8px;top:600px;font-size:12.6px;line-height:14px;font-weight:700;color:#2a2d36;letter-spacing:0.397px;">184 684 €</span><span class="t" style="left:882.32px;top:644px;font-size:11.4px;line-height:12px;font-weight:400;color:#666a72;letter-spacing:0.502px;">90-120 d</span><div class="a" style="left:1033px;top:642.8px;width:31.200000000000045px;height:16px;background:#feb28d;border-radius:5px;"></div><div class="a" style="left:1064.8px;top:642.8px;width:5.0px;height:16px;background:#e92131;border-radius:2.5px;"></div><div class="a" style="left:1070.4px;top:642.8px;width:5.099999999999909px;height:16px;background:#a0eed0;border-radius:2.5px;"></div><span class="t" style="left:1085.4px;top:643px;font-size:12.6px;line-height:14px;font-weight:700;color:#2a2d36;letter-spacing:0.258px;">91 030 €</span><span class="t" style="left:887.11px;top:688px;font-size:11.4px;line-height:12px;font-weight:400;color:#666a72;letter-spacing:0.842px;">60-90 d</span><div class="a" style="left:1033px;top:686.6px;width:93.40000000000009px;height:16px;background:#feb28d;border-radius:5px;"></div><div class="a" style="left:1127px;top:686.6px;width:15.799999999999955px;height:16px;background:#e92131;border-radius:5px;"></div><div class="a" style="left:1143.4px;top:686.6px;width:10.399999999999864px;height:16px;background:#a0eed0;border-radius:5px;"></div><span class="t" style="left:1164.2px;top:687px;font-size:12.6px;line-height:14px;font-weight:700;color:#2a2d36;letter-spacing:0.502px;">258 688 €</span><span class="t" style="left:887.11px;top:732px;font-size:11.4px;line-height:12px;font-weight:400;color:#666a72;letter-spacing:0.842px;">30-60 d</span><div class="a" style="left:1033px;top:730.4px;width:85.79999999999995px;height:16px;background:#feb28d;border-radius:5px;"></div><span class="t" style="left:1129px;top:731px;font-size:12.6px;line-height:14px;font-weight:700;color:#2a2d36;letter-spacing:-0.412px;">183 711 €</span><span class="t" style="left:895.9px;top:775px;font-size:11.4px;line-height:12px;font-weight:400;color:#666a72;letter-spacing:0.580px;">< 30 d</span><div class="a" style="left:1033px;top:774.2px;width:209.20000000000005px;height:16px;background:#feb28d;border-radius:5px;"></div><div class="a" style="left:1242.9px;top:774.2px;width:3.199999999999818px;height:16px;background:#e92131;border-radius:1.6px;"></div><span class="t" style="left:1257.4px;top:775px;font-size:12.6px;line-height:14px;font-weight:700;color:#2a2d36;letter-spacing:0.456px;">455 629 €</span><span class="t" style="left:909.59px;top:819px;font-size:11.4px;line-height:12px;font-weight:400;color:#666a72;letter-spacing:-0.348px;">Due</span><div class="a" style="left:1033px;top:818px;width:383.79999999999995px;height:16px;background:#cbdefc;border-radius:5px;"></div><div class="a" style="left:1417.5px;top:818px;width:19.90000000000009px;height:16px;background:#e92131;border-radius:5px;"></div><span class="t" style="left:1448.0px;top:819px;font-size:12.6px;line-height:14px;font-weight:700;color:#2a2d36;letter-spacing:0.502px;">863 585 €</span><div class="a" style="left:909.3px;top:888px;width:12px;height:12px;background:#feb28d;border-radius:4.8px;"></div><span class="t" style="left:926.8px;top:887px;font-size:12px;line-height:14px;font-weight:400;color:#686b73;letter-spacing:0.688px;">Overdue</span><div class="a" style="left:995.7px;top:888px;width:12px;height:12px;background:#cbdefc;border-radius:4.8px;"></div><span class="t" style="left:1012.4px;top:887px;font-size:12px;line-height:14px;font-weight:400;color:#686b73;letter-spacing:0.652px;">Due</span><div class="a" style="left:1055.4px;top:888px;width:12px;height:12px;background:#e92131;border-radius:4.8px;"></div><span class="t" style="left:1072.2px;top:887px;font-size:12px;line-height:14px;font-weight:400;color:#686b73;letter-spacing:0.616px;">Disputed</span><div class="a" style="left:1142.9px;top:888px;width:12px;height:12px;background:#fbbc1c;border-radius:4.8px;"></div><span class="t" style="left:1159.2px;top:887px;font-size:12px;line-height:14px;font-weight:400;color:#686b73;letter-spacing:0.519px;">Recovery</span><div class="a" style="left:1233.6px;top:888px;width:12px;height:12px;background:#a0eed0;border-radius:4.8px;"></div><span class="t" style="left:1251.0px;top:887px;font-size:12px;line-height:14px;font-weight:400;color:#686b73;letter-spacing:0.485px;">Upcoming Payment</span><div class="a" style="left:1382.4px;top:888px;width:12px;height:12px;background:#7cc4fb;border-radius:4.8px;"></div><span class="t" style="left:1399.2px;top:887px;font-size:12px;line-height:14px;font-weight:400;color:#686b73;letter-spacing:0.522px;">Misc Debit Operations</span></section><aside aria-label="Chat"><div class="a" style="left:1846px;top:837px;width:48px;height:48px;background:#4dcea1;border-radius:24px;box-shadow:0 2px 8px rgba(0,0,0,.10),0 4px 32px rgba(0,0,0,.10);"></div><svg class="a" style="left:1858px;top:848px;" width="24" height="26" viewBox="0 0 24 26" fill="none" stroke="none" stroke-width="0" stroke-linecap="round" stroke-linejoin="round"><path d="M4 1.2 H20 a2.6 2.6 0 0 1 2.6 2.6 V24.6 L17.6 21.9 H4 A2.6 2.6 0 0 1 1.4 19.3 V3.8 A2.6 2.6 0 0 1 4 1.2 z" fill="#fff" stroke="none"/><path d="M4.9 17 c4 3.2 9 3.2 13 0" stroke="#4dcea1" stroke-width="1.5" fill="none"/></svg></aside></body></html>
